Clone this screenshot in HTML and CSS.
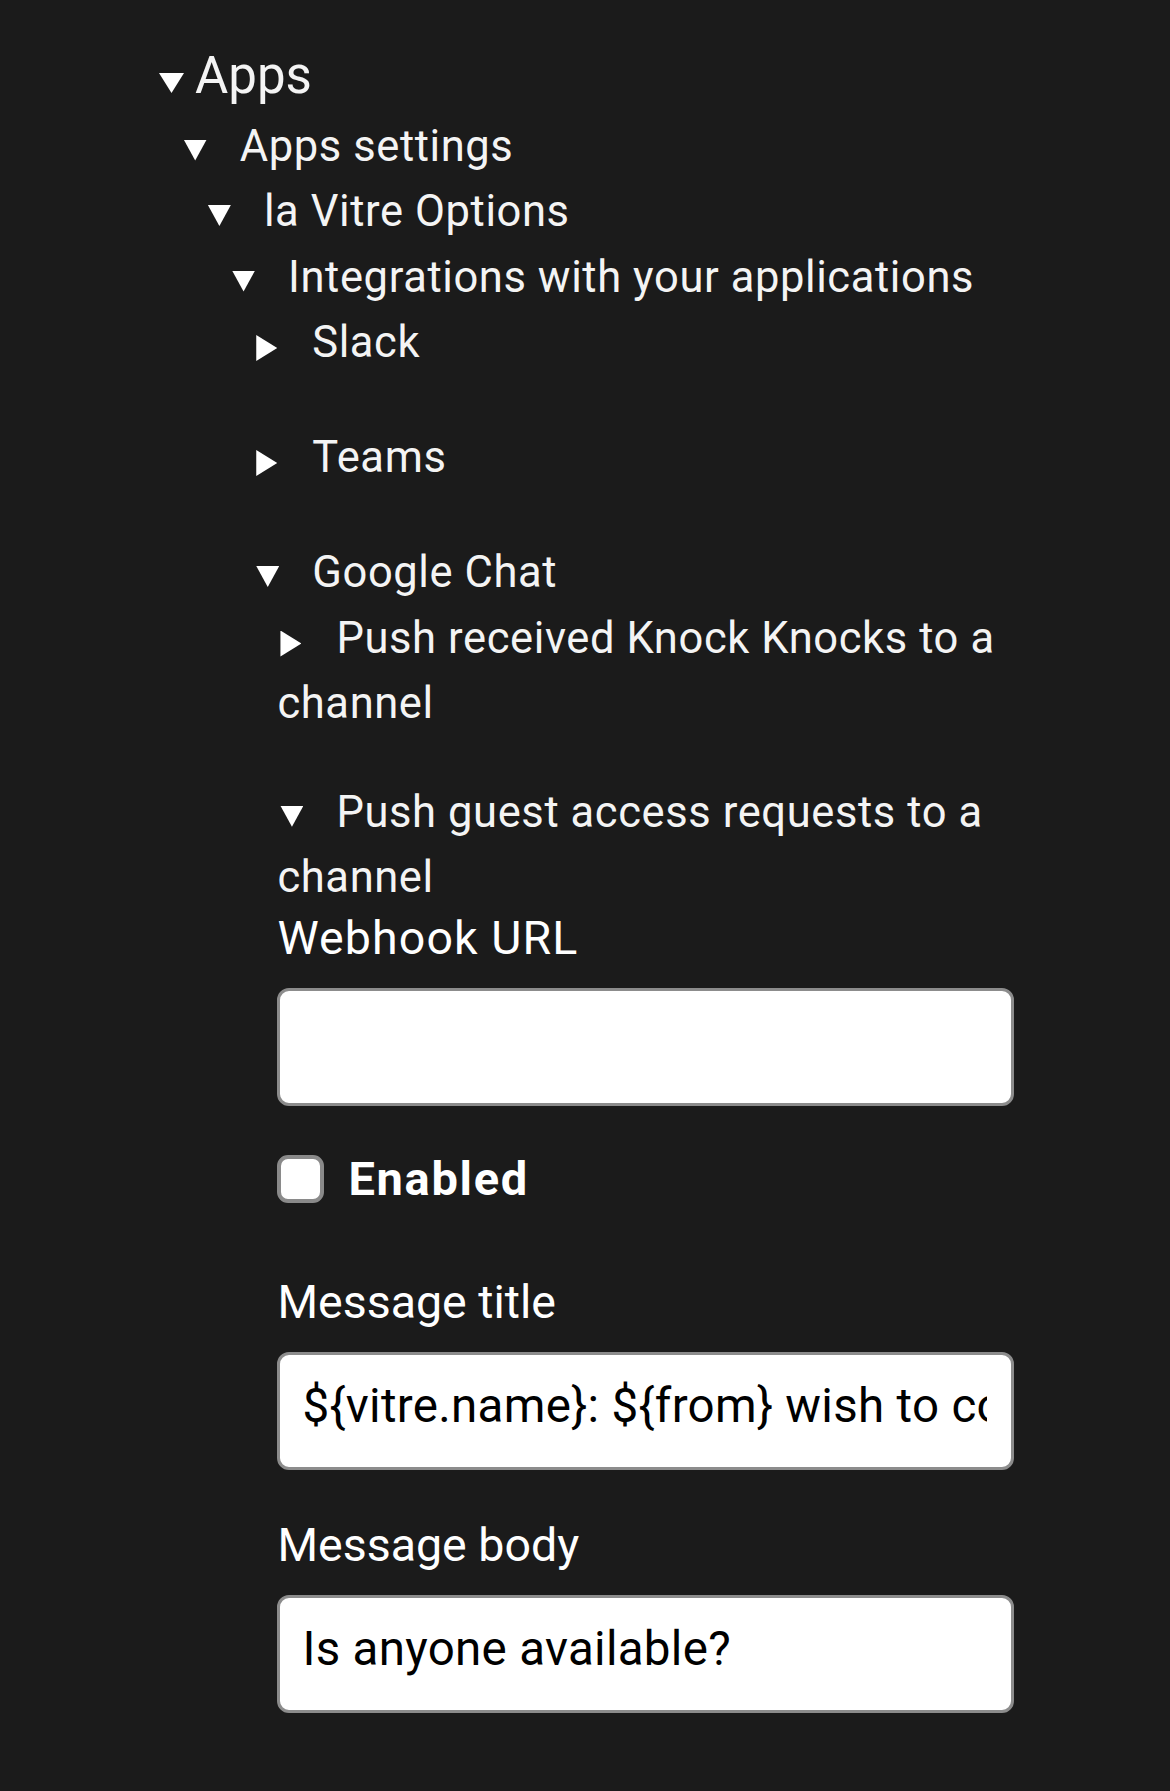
FILE: index.html
```html
<!DOCTYPE html>
<html lang="en">
<head>
<meta charset="utf-8">
<title>Apps settings</title>
<link rel="stylesheet" href="styles.css">
</head>
<body>
<div class="page">
  <details class="tree top" open>
    <summary class="sum sum-top">Apps</summary>
    <details class="tree nested" open>
      <summary class="sum">Apps settings</summary>
      <details class="tree nested" open>
        <summary class="sum">la Vitre Options</summary>
        <details class="tree nested" open>
          <summary class="sum">Integrations with your applications</summary>
          <details class="tree nested app-closed">
            <summary class="sum">Slack</summary>
          </details>
          <details class="tree nested app-closed">
            <summary class="sum">Teams</summary>
          </details>
          <details class="tree nested" open>
            <summary class="sum">Google Chat</summary>
            <details class="tree nested sub-closed">
              <summary class="sum">Push received Knock Knocks to a channel</summary>
            </details>
            <details class="tree nested" open>
              <summary class="sum">Push guest access requests to a channel</summary>
              <div class="form">
                <label class="field-label label-webhook" for="webhook">Webhook URL</label>
                <input class="text-input" id="webhook" type="text" value="">
                <div class="check-row">
                  <input class="checkbox" id="enabled" type="checkbox">
                  <label class="check-label" for="enabled">Enabled</label>
                </div>
                <label class="field-label label-title" for="title">Message title</label>
                <input class="text-input" id="title" type="text" value="${vitre.name}: ${from} wish to connect">
                <label class="field-label label-body" for="body">Message body</label>
                <input class="text-input" id="body" type="text" value="Is anyone available?">
              </div>
            </details>
          </details>
        </details>
      </details>
    </details>
  </details>
</div>
</body>
</html>
```
FILE: styles.css
```css
html, body {
  margin: 0;
  padding: 0;
  background: #1b1b1b;
}

body {
  font-family: Roboto, "Noto Sans", sans-serif;
  color: #f4f4f4;
  min-height: 1791px;
}

.page {
  width: 857px;
  margin: 0 auto;
  padding-top: 38px;
}

.tree {
  display: block;
}

.nested {
  margin-left: 24.2px;
}

.sum {
  display: block;
  list-style: none;
  cursor: pointer;
  font-size: 43.5px;
  line-height: 65.5px;
  letter-spacing: 0.6px;
}

.sum::-webkit-details-marker {
  display: none;
}

.sum::before {
  content: "";
  display: inline-block;
  background: #ffffff;
  width: 21px;
  height: 26px;
  margin: 0 35px 0 3px;
  vertical-align: -4px;
  clip-path: polygon(0 0, 100% 50%, 0 100%);
}

details[open] > .sum::before {
  width: 23px;
  height: 21px;
  margin: 0 33px 0 3px;
  vertical-align: baseline;
  clip-path: polygon(0 0, 100% 0, 50% 100%);
}

.sum-top {
  font-size: 51px;
  line-height: 75.5px;
  letter-spacing: 0;
}

details[open] > .sum-top::before {
  width: 25px;
  height: 20px;
  margin: 0 11px 0 2.5px;
}

.app-closed {
  margin-bottom: 49.5px;
}

.sub-closed {
  margin-bottom: 43.2px;
}

.form {
  display: flex;
  flex-direction: column;
}

.field-label {
  display: block;
  font-size: 46.5px;
  line-height: 55px;
  color: #ffffff;
}

.label-webhook {
  letter-spacing: 1.1px;
}

.label-title {
  margin-top: 72.8px;
}

.label-body {
  margin-top: 47.8px;
}

.text-input {
  display: block;
  box-sizing: border-box;
  width: 100%;
  height: 118px;
  margin: 22px 0 0;
  padding: 0 24px 10px 22px;
  border: 3px solid #8c8c8c;
  border-radius: 12px;
  background: #ffffff;
  color: #000000;
  font-family: Roboto, "Noto Sans", sans-serif;
  font-size: 47.5px;
  letter-spacing: 0.3px;
  outline: none;
}

.check-row {
  display: flex;
  align-items: center;
  margin-top: 49px;
  height: 48px;
}

.checkbox {
  appearance: none;
  -webkit-appearance: none;
  box-sizing: border-box;
  width: 47px;
  height: 48px;
  margin: 0;
  border: 4px solid #8a8a8a;
  border-radius: 11px;
  background: #ffffff;
}

.check-label {
  margin-left: 24px;
  font-size: 47px;
  font-weight: 700;
  letter-spacing: 1.7px;
  line-height: 55px;
  color: #ffffff;
}
```
